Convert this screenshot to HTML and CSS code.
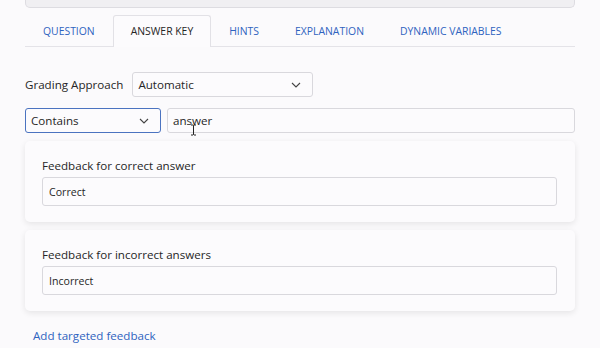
FILE: index.html
```html
<!DOCTYPE html>
<html>
<head>
	<meta charset="utf-8">
	<title>Answer key</title>
	<link rel="stylesheet" href="styles.css">
</head>
<body>

<div class="page">
	<div class="top-box"></div>

	<ul class="tabs">
		<li class="tab">QUESTION</li>
		<li class="tab active">ANSWER KEY</li>
		<li class="tab">HINTS</li>
		<li class="tab">EXPLANATION</li>
		<li class="tab">DYNAMIC VARIABLES</li>
	</ul>

	<div class="row grading">
		<span class="label">Grading Approach</span>
		<div class="select wide">
			<span>Automatic</span>
			<svg width="10" height="6" viewBox="0 0 10 6"><path d="M1 1l4 4 4-4" fill="none" stroke="#444" stroke-width="1.1"/></svg>
		</div>
	</div>

	<div class="row match">
		<div class="select focus">
			<span>Contains</span>
			<svg width="10" height="6" viewBox="0 0 10 6"><path d="M1 1l4 4 4-4" fill="none" stroke="#444" stroke-width="1.1"/></svg>
		</div>
		<div class="input grow">
			answer
			<svg class="cursor" width="7" height="12" viewBox="0 0 7 12"><path d="M1 1h2l.5.5L4 1h2M3.5 1.5v9M1 11h2l.5-.5.5.5h2" fill="none" stroke="#222" stroke-width="1"/></svg>
		</div>
	</div>

	<div class="card">
		<div class="card-label">Feedback for correct answer</div>
		<div class="input field">Correct</div>
	</div>

	<div class="card">
		<div class="card-label">Feedback for incorrect answers</div>
		<div class="input field">Incorrect</div>
	</div>

	<a href="#" class="add-link">Add targeted feedback</a>
</div>

</body>
</html>
```

FILE: styles.css
```css
body {
	margin: 0;
	background: #fbfafc;
	color: #262626;
	font-family: "Open Sans", "Noto Sans", sans-serif;
}
.page {
	padding: 0 25px;
}
.top-box {
	height: 7px;
	background: #f0eff2;
	border: 1px solid #dddce1;
	border-top: none;
	border-radius: 0 0 5px 5px;
}
.tabs {
	display: flex;
	margin: 7px 0 0;
	padding: 0;
	list-style: none;
	border-bottom: 1px solid #e4e3e8;
}
.tab {
	padding: 0 17px;
	height: 30px;
	line-height: 31px;
	font-size: 10.4px;
	white-space: nowrap;
	color: #2f63bf;
	border: 1px solid transparent;
	border-bottom: none;
	margin-bottom: -1px;
}
.tab.active {
	color: #262626;
	background: #fcfbfd;
	border-color: #e2e1e6;
	border-radius: 3px 3px 0 0;
	height: 31px;
}
.row {
	display: flex;
	align-items: center;
	gap: 6px;
}
.grading {
	margin-top: 25px;
}
.match {
	margin-top: 11px;
}
.label {
	font-size: 11.6px;
	margin-right: 3px;
	white-space: nowrap;
}
.select,
.input {
	display: flex;
	align-items: center;
	box-sizing: border-box;
	height: 25px;
	padding: 0 5px;
	font-size: 11.6px;
	background: #fcfbfd;
	border: 1px solid #d9d8dd;
	border-radius: 3px;
}
.select {
	justify-content: space-between;
	padding-right: 11px;
}
.select.wide {
	width: 181px;
}
.select.focus {
	width: 136px;
	border-color: #4b73c0;
}
.grow {
	flex: 1;
	position: relative;
}
.cursor {
	position: absolute;
	left: 22px;
	top: 15px;
}
.card {
	margin-top: 8px;
	padding: 16px 18px 16px 17px;
	background: #fcfbfd;
	border-radius: 5px;
	box-shadow: 0 2px 6px rgba(0, 0, 0, .09);
}
.card:first-of-type {
	margin-top: 6px;
}
.card-label {
	font-size: 11.6px;
	line-height: 18px;
}
.input.field {
	margin-top: 2px;
	height: 29px;
	padding: 0 6px;
	font-size: 10.6px;
}
.add-link {
	display: inline-block;
	margin: 17px 0 0 8px;
	font-size: 11.6px;
	color: #2f63bf;
	text-decoration: none;
}
```
